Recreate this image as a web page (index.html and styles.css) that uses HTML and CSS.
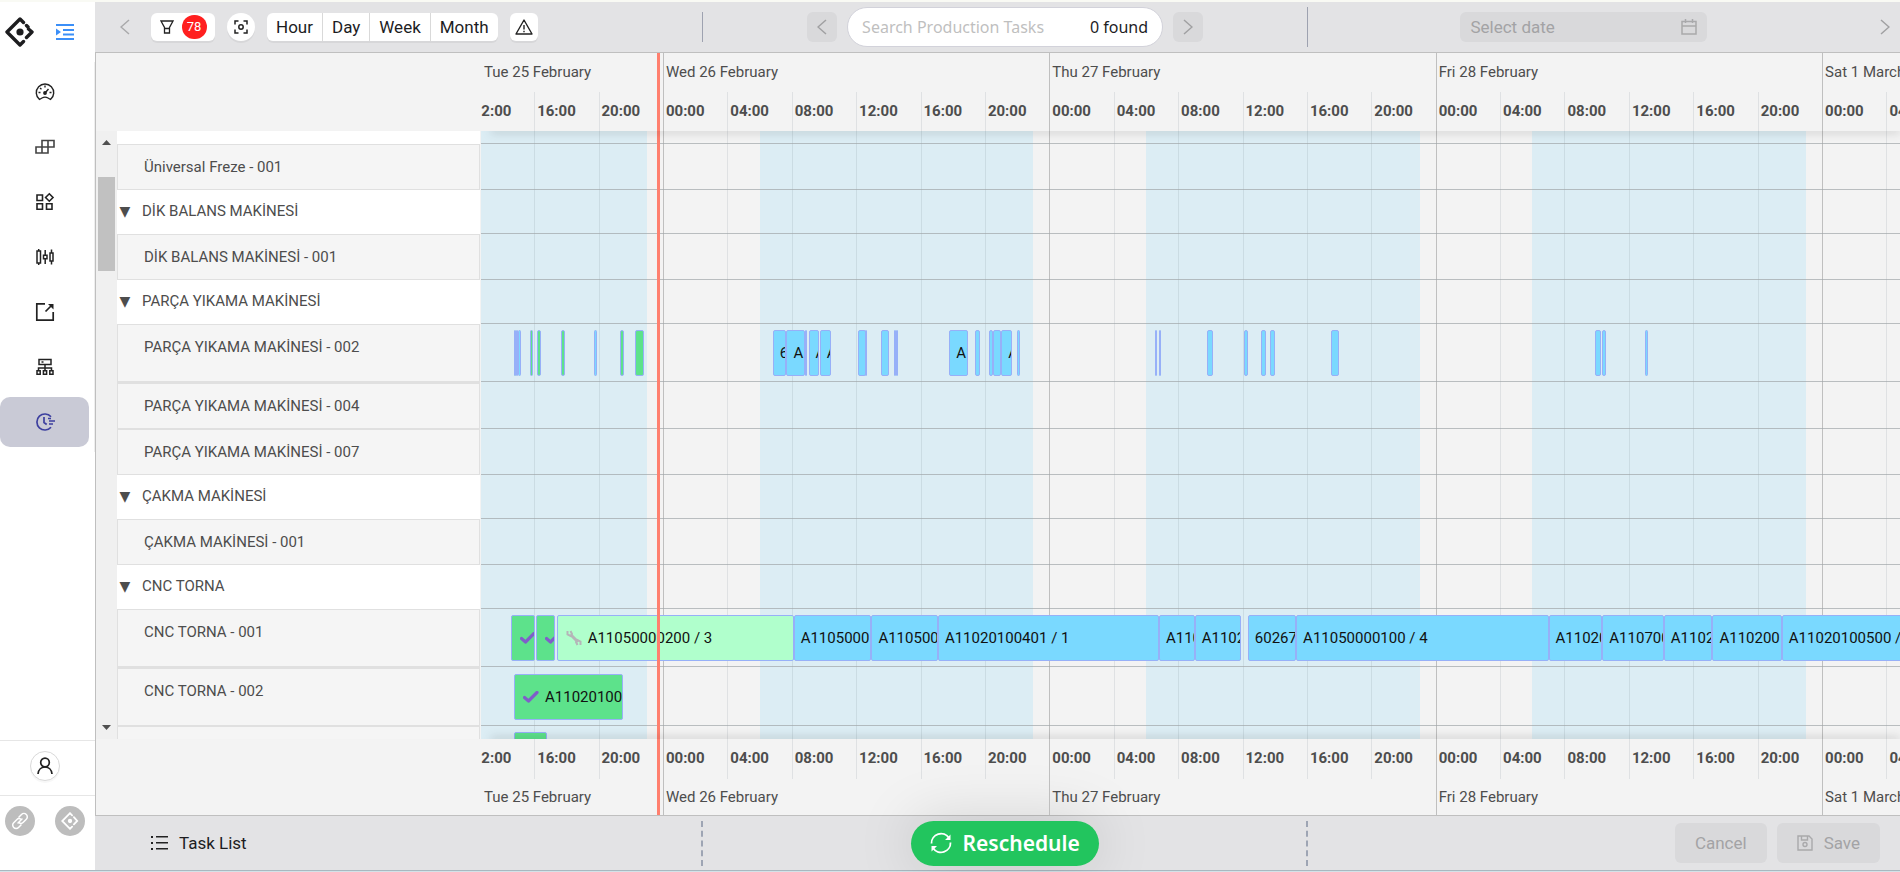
FILE: index.html
```html
<!DOCTYPE html>
<html lang="en">
<head>
    <meta charset="UTF-8">
    <meta name="viewport" content="width=device-width, initial-scale=1.0">
    <title>Production Schedule</title>
    <link rel="stylesheet" href="styles.css">
</head>
<body>
    <div class="page">
        <aside class="sidebar">
            <div class="brand">
                <a href="#" class="logo" aria-label="Home">
                    <svg width="30" height="30" viewBox="0 0 30 30" fill="none" stroke="#1d1d1f" stroke-width="3.4" stroke-linejoin="round">
                        <path d="M18.5 5.5 15 2 2 15l13 13 3.5-3.5M21.5 8.500l1.500 1.500M23.500 12l3.500 3-5.500 5.500" stroke-linecap="round"/>
                        <circle cx="15" cy="15" r="3.6" fill="#1d1d1f" stroke="none"/>
                    </svg>
                </a>
                <button type="button" class="plain" aria-label="Expand menu">
                    <svg width="18" height="16" viewBox="0 0 18 16" fill="#3b8ff8">
                        <path d="M0 0h18v2H0zM7 5h11v2H7zM7 9.500h11v2H7zM0 14h18v2H0zM0 4.500l5 3.500-5 3.500z"/>
                    </svg>
                </button>
            </div>
            <nav class="nav">
                <a href="#" aria-label="Dashboard">
                    <svg width="20" height="20" viewBox="0 0 20 20" fill="none" stroke="#222" stroke-width="1.400">
                        <path d="M4.500 17.500a8.700 8.700 0 1 1 11 0l-2.500-1.500a6 6 0 0 0-6 0zM10 11l3.500-4M10 3.500v2M3.500 10.500h2M14.500 10.500h2M5 6l1.500 1.200"/>
                        <circle cx="10" cy="11" r="1.200" fill="#222"/>
                    </svg>
                </a>
                <a href="#" aria-label="Blocks">
                    <svg width="20" height="20" viewBox="0 0 20 20" fill="none" stroke="#444" stroke-width="1.600">
                        <path d="M7 3.500h12v6.500H7zM13 3.500V16M1 10h12v6H1zM7 10v6"/>
                    </svg>
                </a>
                <a href="#" aria-label="Apps">
                    <svg width="20" height="20" viewBox="0 0 20 20" fill="none" stroke="#222" stroke-width="1.600">
                        <path d="M2 3h5.500v5.500H2zM2 11.700h5.500v5.500H2zM11.500 11.700H17v5.500h-5.500zM14.300 1.800l3.700 3.700-3.700 3.700-3.700-3.700z"/>
                    </svg>
                </a>
                <a href="#" aria-label="Levels">
                    <svg width="20" height="20" viewBox="0 0 20 20" fill="none" stroke="#222" stroke-width="1.500">
                        <path d="M2 4h3.500v12H2zM3.700 2v2M3.700 16v2M8.500 8.200H12v3.600H8.500zM10.200 3v5M10.200 12v5M15 6h3v8h-3zM16.500 2.500V6M16.500 14v3.500"/>
                    </svg>
                </a>
                <a href="#" aria-label="Export">
                    <svg width="20" height="20" viewBox="0 0 20 20" fill="none" stroke="#222" stroke-width="1.700">
                        <path d="M10 1.800H1.800v16.400h16.400V10M10.500 9.500 17 3"/>
                        <path d="M13 2h5.500v5.500z" fill="#222" stroke="none"/>
                    </svg>
                </a>
                <a href="#" aria-label="Structure">
                    <svg width="20" height="20" viewBox="0 0 20 20" fill="none" stroke="#222" stroke-width="1.500">
                        <path d="M4 2.500h12v5H4zM10 7.500v6M3.500 13.500V11h13v2.500M2 13.700h3.200v3.500H2zM8.400 13.700h3.200v3.500H8.400zM14.800 13.700H18v3.500h-3.200zM6.500 5h2"/>
                    </svg>
                </a>
                <a href="#" class="active" aria-label="Schedule">
                    <svg width="22" height="20" viewBox="0 0 22 20" fill="none" stroke="#3c3f9f" stroke-width="1.700">
                        <path d="M17 4.800a8 8 0 1 0 0 10.400M10 5v5.500l2.700 2M15 9h6M15 12h4M14 6.500h3"/>
                    </svg>
                </a>
            </nav>
            <div class="user">
                <button type="button" class="round" aria-label="Account">
                    <svg width="16" height="18" viewBox="0 0 16 18" fill="none" stroke="#222" stroke-width="1.700">
                        <circle cx="8" cy="5.500" r="4.300"/>
                        <path d="M1 17c.4-4.500 3.500-7 7-7s6.600 2.500 7 7"/>
                    </svg>
                </button>
            </div>
            <div class="links">
                <a href="#" aria-label="Link">
                    <svg width="18" height="18" viewBox="0 0 18 18" fill="none" stroke="#fff" stroke-width="1.500" stroke-linecap="round">
                        <path d="M8 5l2.500-2.500a3.300 3.300 0 0 1 4.800 4.800l-3 3a3.300 3.300 0 0 1-4.300.4M10 13l-2.500 2.500a3.300 3.300 0 0 1-4.800-4.800l3-3A3.300 3.300 0 0 1 10 7.300M7 11l4-4"/>
                    </svg>
                </a>
                <a href="#" aria-label="About">
                    <svg width="18" height="18" viewBox="0 0 30 30" fill="none" stroke="#fff" stroke-width="3">
                        <path d="M18.500 5.500 15 2 2 15l13 13 3.500-3.500M21.500 8.500l5.500 6.500-5.500 5.500" stroke-linecap="round"/>
                        <circle cx="15" cy="15" r="3.600" fill="#fff" stroke="none"/>
                    </svg>
                </a>
            </div>
        </aside>

        <main class="main">
            <header class="toolbar">
                <div class="tools">
                    <button type="button" class="plain arrow" aria-label="Back">
                        <svg width="10" height="16" viewBox="0 0 10 16" fill="none" stroke="#a9a9ab" stroke-width="1.500"><path d="M9 1 1 8l8 7"/></svg>
                    </button>
                    <button type="button" class="btn filter" aria-label="Filter, 78 active">
                        <svg width="14" height="14" viewBox="0 0 14 14" fill="none" stroke="#222" stroke-width="1.300"><path d="M1 1h12L9.500 7.500V13h-5V7.500zM4.500 8.500h5"/></svg>
                        <span class="badge">78</span>
                    </button>
                    <button type="button" class="btn focus" aria-label="Focus">
                        <svg width="14" height="14" viewBox="0 0 14 14" fill="none" stroke="#222" stroke-width="1.500"><path d="M1 4.500V1h3.500M9.500 1H13v3.500M13 9.500V13H9.500M4.500 13H1V9.500"/><circle cx="7" cy="7" r="2.200"/></svg>
                    </button>
                    <div class="scale">
                        <button type="button">Hour</button>
                        <button type="button">Day</button>
                        <button type="button">Week</button>
                        <button type="button">Month</button>
                    </div>
                    <button type="button" class="btn warn" aria-label="Warnings">
                        <svg width="18" height="16" viewBox="0 0 18 16" fill="none" stroke="#222" stroke-width="1.400" stroke-linejoin="round"><path d="M9 1l8 14H1zM9 6v4.500M9 11.800v1.500"/></svg>
                    </button>
                </div>
                <div class="search">
                    <button type="button" class="step" aria-label="Previous result">
                        <svg width="10" height="16" viewBox="0 0 10 16" fill="none" stroke="#a0a0a2" stroke-width="1.500"><path d="M9 1 1 8l8 7"/></svg>
                    </button>
                    <div class="searchBox">
                        <input type="text" id="search" placeholder="Search Production Tasks" aria-label="Search Production Tasks">
                        <output for="search">0 found</output>
                    </div>
                    <button type="button" class="step" aria-label="Next result">
                        <svg width="10" height="16" viewBox="0 0 10 16" fill="none" stroke="#a0a0a2" stroke-width="1.500"><path d="M1 1l8 7-8 7"/></svg>
                    </button>
                </div>
                <div class="dates">
                    <div class="dateBox">
                        <input type="text" placeholder="Select date" aria-label="Select date" disabled>
                        <svg width="16" height="16" viewBox="0 0 16 16" fill="none" stroke="#a9a9ab" stroke-width="1.500"><path d="M1 2.500h14V15H1zM1 7h14M4.500 0v4M11.500 0v4"/></svg>
                    </div>
                    <button type="button" class="plain next" aria-label="Forward">
                        <svg width="10" height="16" viewBox="0 0 10 16" fill="none" stroke="#a0a0a2" stroke-width="1.500"><path d="M1 1l8 7-8 7"/></svg>
                    </button>
                </div>
            </header>

            <section class="timeline">
                <div class="groups">
                    <div class="scrollbar">
                        <svg width="9" height="5" viewBox="0 0 9 5" fill="#505050"><path d="M0 5 4.500 0 9 5z"/></svg>
                        <div class="thumb"></div>
                        <svg class="down" width="9" height="5" viewBox="0 0 9 5" fill="#505050"><path d="M0 0h9L4.500 5z"/></svg>
                    </div>
                    <div class="labels" id="labels"></div>
                </div>
                <div class="chart">
                    <div class="bands" id="bands"></div>
                    <div class="lines" id="lines"></div>
                    <div class="axis" id="axisTop"></div>
                    <div class="plot" id="plot"></div>
                    <div class="axis axisBottom" id="axisBottom"></div>
                    <div class="now" id="now"></div>
                </div>
            </section>

            <footer class="footer">
                <div class="tasks">
                    <button type="button" class="plain taskList">
                        <svg width="17" height="14" viewBox="0 0 17 14" fill="#222"><path d="M0 0h2v2H0zM5 0h12v1.500H5zM0 6h2v2H0zM5 6h12v1.500H5zM0 12h2v2H0zM5 12h12v1.500H5z"/></svg>
                        Task List
                    </button>
                </div>
                <div class="run">
                    <button type="button" class="reschedule">
                        <svg width="22" height="22" viewBox="0 0 22 22" fill="none" stroke="#fff" stroke-width="1.800">
                            <path d="M1.500 11.500A9.500 9.500 0 0 1 19 6M20.500 10.500A9.500 9.500 0 0 1 3 16"/>
                            <path d="M20.500 2.500V8H15zM1.500 19.500V14H7z" fill="#fff" stroke="none"/>
                        </svg>
                        Reschedule
                    </button>
                </div>
                <div class="actions">
                    <button type="button" disabled>Cancel</button>
                    <button type="button" disabled>
                        <svg width="16" height="16" viewBox="0 0 16 16" fill="none" stroke="#a9a9ab" stroke-width="1.400"><path d="M1 1h11l3 3v11H1zM4.500 1v4h6V1"/><circle cx="8" cy="9.500" r="2"/></svg>
                        Save
                    </button>
                </div>
            </footer>
        </main>
    </div>
    <script src="script.js"></script>
</body>
</html>
```
FILE: styles.css
```css
* {
	box-sizing: border-box;
}
body {
	margin: 0;
	font-family: Roboto, "Liberation Sans", sans-serif;
	font-size: 15px;
	color: #4d4d4d;
	background-color: #f9faf4;
}
button, input, output {
	font-family: inherit;
	font-size: 17px;
	color: #1d1d1f;
}
button {
	display: flex;
	align-items: center;
	justify-content: center;
	border: none;
	padding: 0;
	background-color: white;
}
svg {
	display: block;
	flex: none;
}
.plain {
	background: none;
}
.page {
	display: flex;
	height: 100vh;
	padding-top: 2px;
	border-bottom: 1px solid #d3e2e8;
}

/* sidebar */
.sidebar {
	display: flex;
	flex-direction: column;
	width: 95px;
	flex: none;
	background-color: white;
	border-bottom: 1px solid #a9b8c0;
}
.brand {
	display: flex;
	align-items: center;
	gap: 21px;
	height: 60px;
	padding-left: 5px;
}
.nav {
	display: flex;
	flex-direction: column;
	gap: 5px;
	padding: 5px 5px 5px 0;
	border-right: 1px solid #eee;
}
.nav a {
	display: flex;
	align-items: center;
	justify-content: center;
	height: 50px;
}
.nav .active {
	background-color: #c9cad6;
	border-radius: 10px;
}
.user {
	margin-top: auto;
	height: 55px;
	padding: 10px 30px;
	border-top: 1px solid #e6e6e6;
}
.round {
	width: 30px;
	height: 30px;
	border: 1px solid #d9d9d9;
	border-radius: 50%;
	box-shadow: 0 2px 0 rgba(0, 0, 0, 0.03);
}
.links {
	display: flex;
	gap: 20px;
	height: 75px;
	padding: 10px 5px;
	border-top: 1px solid #e6e6e6;
}
.links a {
	display: flex;
	align-items: center;
	justify-content: center;
	width: 30px;
	height: 30px;
	border-radius: 50%;
	background-color: #bdbdbd;
}

/* top toolbar */
.main {
	display: flex;
	flex-direction: column;
	flex: 1;
	min-width: 0;
}
.toolbar, .footer {
	display: grid;
	grid-template-columns: 33.7% 33.5% 1fr;
	align-items: center;
	background-color: #e3e3e5;
}
.toolbar {
	height: 50px;
}
.tools {
	display: flex;
	align-items: center;
	height: 30px;
	border-right: 1px solid #9ea2b0;
}
.arrow {
	width: 56px;
	padding-left: 3px;
}
.btn {
	height: 28px;
	border-radius: 6px;
	box-shadow: 0 2px 0 rgba(0, 0, 0, 0.05);
}
.filter {
	width: 64px;
	gap: 8px;
}
.badge {
	width: 25px;
	height: 24px;
	line-height: 24px;
	border-radius: 12px;
	font-size: 13px;
	color: white;
	background-color: #ff1f1f;
}
.focus {
	width: 28px;
	margin: 0 12px;
	border-radius: 50%;
}
.scale {
	display: flex;
	border-radius: 6px;
	box-shadow: 0 2px 0 rgba(0, 0, 0, 0.05);
	overflow: hidden;
}
.scale button {
	height: 28px;
	padding: 0 9px;
	border-right: 1px solid #d9d9d9;
}
.scale button:last-child {
	border-right: none;
}
.warn {
	width: 28px;
	margin-left: 12px;
}
.search {
	display: flex;
	align-items: center;
	justify-content: center;
	gap: 10px;
	height: 40px;
	border-right: 1px solid #9ea2b0;
}
.step {
	width: 30px;
	height: 30px;
	border-radius: 6px;
	background-color: #d9d9db;
}
.searchBox {
	display: flex;
	align-items: center;
	width: 316px;
	height: 40px;
	padding: 0 14px;
	border: 1px solid #d2d2da;
	border-radius: 20px;
	background-color: white;
	font-family: "Noto Sans", "Open Sans", sans-serif;
}
.searchBox input {
	flex: 1;
	min-width: 0;
	padding: 0;
	border: none;
	background: none;
	font-size: 16px;
}
.searchBox output {
	font-size: 16px;
}
.searchBox input::placeholder {
	color: #bfbfbf;
}
.dates {
	display: flex;
	align-items: center;
	justify-content: center;
}
.dateBox {
	display: flex;
	align-items: center;
	width: 247px;
	height: 30px;
	margin: 0 auto;
	padding: 0 10px;
	border-radius: 6px;
	background-color: #d9d9db;
}
.dateBox input {
	flex: 1;
	min-width: 0;
	padding: 0;
	border: none;
	background: none;
}
.dateBox input::placeholder {
	color: #a3a3a5;
}
.next {
	justify-content: flex-end;
	width: 40px;
	padding-right: 10px;
}

/* timeline */
.timeline {
	display: flex;
	flex: 1;
	min-height: 0;
	border: 1px solid #bfbfbf;
	border-right: none;
	background-color: #f3f3f3;
}
.groups {
	display: flex;
	width: 385px;
	flex: none;
	padding: 78px 1px 76px 0;
}
.scrollbar {
	display: flex;
	flex-direction: column;
	align-items: center;
	width: 21px;
	flex: none;
	padding: 9px 0;
	background-color: #f0f0f0;
}
.thumb {
	width: 17px;
	height: 94px;
	margin-top: 32px;
	background-color: #c1c1c1;
}
.down {
	margin-top: auto;
}
.labels {
	flex: 1;
	overflow: hidden;
	background-color: white;
}
.row {
	height: 46px;
}
.row.group {
	height: 44px;
}
.row.cut {
	height: 13px;
}
.row.next-item {
	height: 47px;
}
.row.busy {
	height: 58px;
}
.row.busy.next-item {
	height: 59px;
}
.labels .row {
	padding: 11px 0 0 26px;
	line-height: 22px;
	border: 1px solid #e0e0e0;
	background-color: #f5f5f5;
}
.labels .next-item {
	border-top-width: 2px;
}
.labels .group, .labels .cut {
	display: flex;
	gap: 11px;
	padding: 10px 0 0 2px;
	border: none;
	background-color: white;
}
.labels .group button {
	width: 12px;
	height: 22px;
	font-family: "DejaVu Sans", sans-serif;
	font-size: 14px;
	color: #4d4d4d;
}
.chart {
	position: relative;
	display: flex;
	flex-direction: column;
	flex: 1;
	min-width: 0;
	overflow: hidden;
}
.bands, .lines, .now {
	position: absolute;
	top: 0;
	bottom: 0;
}
.bands, .lines {
	left: 0;
	right: 0;
}
.bands {
	top: 78px;
	bottom: 76px;
}
.band {
	position: absolute;
	top: 0;
	bottom: 0;
	background-color: #dcedf4;
}
.line {
	position: absolute;
	top: 39px;
	bottom: 36px;
	border-left: 1px solid rgba(120, 130, 140, 0.16);
}
.line.major {
	top: 0;
	bottom: 0;
	border-color: #bfbfbf;
}
.now {
	width: 3px;
	background-color: #ff7f6e;
}
.axis {
	position: relative;
	height: 78px;
	flex: none;
}
.axisBottom {
	height: 76px;
}
.axis span {
	position: absolute;
	line-height: 20px;
	padding-left: 3px;
	white-space: nowrap;
}
.axis .day {
	top: 9px;
}
.axis .hour {
	top: 48px;
	font-weight: bold;
}
.axisBottom .day {
	top: 48px;
}
.axisBottom .hour {
	top: 9px;
}
.plot {
	position: relative;
	flex: 1;
	min-height: 0;
	overflow: hidden;
}
.plot::before, .plot::after {
	content: "";
	position: absolute;
	top: -1px;
	left: 10px;
	right: 0;
	height: 1px;
	box-shadow: 0 0 10px rgba(0, 0, 0, 0.8);
	z-index: 1;
}
.plot::after {
	top: 100%;
}
.plot .row {
	position: relative;
	border-bottom: 1px solid rgba(160, 165, 168, 0.7);
}
.task {
	position: absolute;
	bottom: 5px;
	display: flex;
	align-items: center;
	height: 46px;
	padding-left: 6px;
	border: 1px solid #97b0f8;
	border-radius: 2px;
	background-color: #7ad9ff;
	color: #111;
	white-space: nowrap;
	overflow: hidden;
}
.task.small {
	padding: 0;
}
.task.done {
	background-color: #5de28b;
}
.task.setup {
	background-color: #b0ffcc;
}
.task svg {
	margin: 0 6px 0 2px;
}

/* bottom bar */
.footer {
	height: 55px;
	border-bottom: 1px solid #a9b8c0;
}
.tasks, .run {
	display: flex;
	align-items: center;
	height: 45px;
	border-right: 2px dashed #9ea5b4;
}
.taskList {
	gap: 11px;
	margin-left: 56px;
}
.run {
	justify-content: center;
}
.reschedule {
	gap: 11px;
	height: 45px;
	padding: 0 19px;
	border-radius: 23px;
	background-color: #22c55e;
	box-shadow: 0 0 60px rgba(0, 0, 0, 0.15);
	font-family: "Noto Sans", "Open Sans", sans-serif;
	font-size: 21px;
	font-weight: 600;
	color: white;
}
.actions {
	display: flex;
	justify-content: flex-end;
	gap: 10px;
	padding-right: 20px;
}
.actions button {
	gap: 11px;
	height: 40px;
	padding: 0 20px;
	border-radius: 6px;
	background-color: #d9d9db;
	color: #a3a3a5;
}
```
FILE: script.js
```js
// All times are hours counted from Wed 26 February 00:00
const viewStart = -11.3;
const viewHours = 88.14;
const currentTime = -0.37;

const days = ['Tue 25 February', 'Wed 26 February', 'Thu 27 February', 'Fri 28 February', 'Sat 1 March'];

// task: [start, end, text, status]
const rows = [
    { type: 'cut' },
    { name: 'Üniversal Freze - 001' },
    { name: 'DİK BALANS MAKİNESİ', type: 'group' },
    { name: 'DİK BALANS MAKİNESİ - 001' },
    { name: 'PARÇA YIKAMA MAKİNESİ', type: 'group' },
    { name: 'PARÇA YIKAMA MAKİNESİ - 002', type: 'busy', tasks: [
        [-9.27, -9.1, '', 'done'], [-9.11, -8.98], [-8.99, -8.82], [-8.25, -8.04, '', 'done'],
        [-7.85, -7.58, '', 'done'], [-6.3, -6.09, '', 'done'], [-4.26, -4.12], [-2.64, -2.42, '', 'done'],
        [-1.71, -1.17, '', 'done'],
        [6.82, 7.64, '6'], [7.67, 8.84, 'A1'], [8.81, 8.96], [9.05, 9.72, 'A'], [9.74, 10.43, 'A'],
        [12.09, 12.6], [12.55, 12.69], [13.52, 14.04], [14.33, 14.46], [14.47, 14.6],
        [17.78, 18.96, 'A1'], [19.37, 19.7], [20.25, 20.51], [20.53, 21.03], [21.01, 21.7, 'A'], [21.99, 22.2],
        [30.56, 30.7], [30.79, 30.92], [33.79, 34.17], [36.12, 36.34], [37.12, 37.45], [37.71, 38.05],
        [41.47, 41.99], [57.92, 58.26], [58.3, 58.58], [61.03, 61.19]
    ] },
    { name: 'PARÇA YIKAMA MAKİNESİ - 004', type: 'next-item' },
    { name: 'PARÇA YIKAMA MAKİNESİ - 007' },
    { name: 'ÇAKMA MAKİNESİ', type: 'group' },
    { name: 'ÇAKMA MAKİNESİ - 001' },
    { name: 'CNC TORNA', type: 'group' },
    { name: 'CNC TORNA - 001', type: 'busy', tasks: [
        [-9.43, -7.93, '', 'done', 'check'], [-7.9, -6.73, '', 'done', 'check'],
        [-6.6, 8.12, 'A11050000200 / 3', 'setup', 'wrench'],
        [8.12, 12.95, 'A1105000'], [12.95, 17.08, 'A110500'], [17.08, 30.81, 'A11020100401 / 1'],
        [30.81, 33.03, 'A110'], [33.03, 35.9, 'A1102'], [36.33, 39.3, '60267'],
        [39.33, 55.01, 'A11050000100 / 4'], [55.01, 58.35, 'A11020'], [58.35, 62.17, 'A110700'],
        [62.17, 65.19, 'A1102'], [65.19, 69.5, 'A110200'], [69.5, 80, 'A11020100500 / 2']
    ] },
    { name: 'CNC TORNA - 002', type: 'busy next-item', tasks: [
        [-9.25, -2.49, 'A11020100', 'done', 'check']
    ] },
    { name: '', type: 'busy', tasks: [[-9.25, -7.2, '', 'done']] }
];

const icons = {
    check: '<svg width="16" height="12" viewBox="0 0 16 12"><path d="M1.500 6.500 5.500 10 14 1.500" fill="none" stroke="#7f5fc9" stroke-width="3.200" stroke-linecap="round" stroke-linejoin="round"/></svg>',
    wrench: '<svg width="16" height="16" viewBox="0 0 16 16"><path d="M5 5l7 7" stroke="#b5b5b8" stroke-width="3"/><path d="M1.500 1v3.500l3 1.500 1.500-2L4.500 1M14.500 15v-3.500l-3-1.500-1.500 2 1.500 3" fill="none" stroke="#b5b5b8" stroke-width="2"/></svg>'
};

const left = hour => (hour - viewStart) / viewHours * 100 + '%';
const width = hours => hours / viewHours * 100 + '%';

function add(parent, className, style, html) {
    const el = document.createElement(html === undefined ? 'div' : 'span');
    el.className = className;
    Object.assign(el.style, style);
    if (html !== undefined) el.innerHTML = html;
    parent.appendChild(el);
    return el;
}

const byId = id => document.getElementById(id);

// Working shifts, grid lines and both axes
days.forEach((day, i) => {
    const start = (i - 1) * 24;
    add(byId('bands'), 'band', { left: left(start + 6), width: width(17) });
    [byId('axisTop'), byId('axisBottom')].forEach(axis => {
        add(axis, 'day', { left: left(Math.max(start, viewStart)) }, day);
        for (let h = 0; h < 24; h += 4) {
            // skip the hours that are scrolled out of view
            if (start + h + 4 < viewStart || start + h > viewStart + viewHours) continue;
            add(axis, 'hour', { left: left(start + h) }, String(h).padStart(2, '0') + ':00');
        }
    });
    for (let h = 0; h < 24; h += 4) {
        add(byId('lines'), h === 0 ? 'line major' : 'line', { left: left(start + h) });
    }
});
byId('now').style.left = left(currentTime);

// Machines and their tasks
rows.forEach(row => {
    const className = 'row ' + (row.type || '');
    const label = add(byId('labels'), className, {});
    if (row.type === 'group') {
        label.innerHTML = '<button type="button" aria-label="Collapse">▼</button>';
    }
    label.append(row.name || '');

    const track = add(byId('plot'), className, {});
    (row.tasks || []).forEach(([start, end, text = '', status = '', icon = '']) => {
        const small = text || icon ? '' : ' small';
        add(track, 'task ' + status + small, { left: left(start), width: width(end - start) }, (icons[icon] || '') + text);
    });
});
```
